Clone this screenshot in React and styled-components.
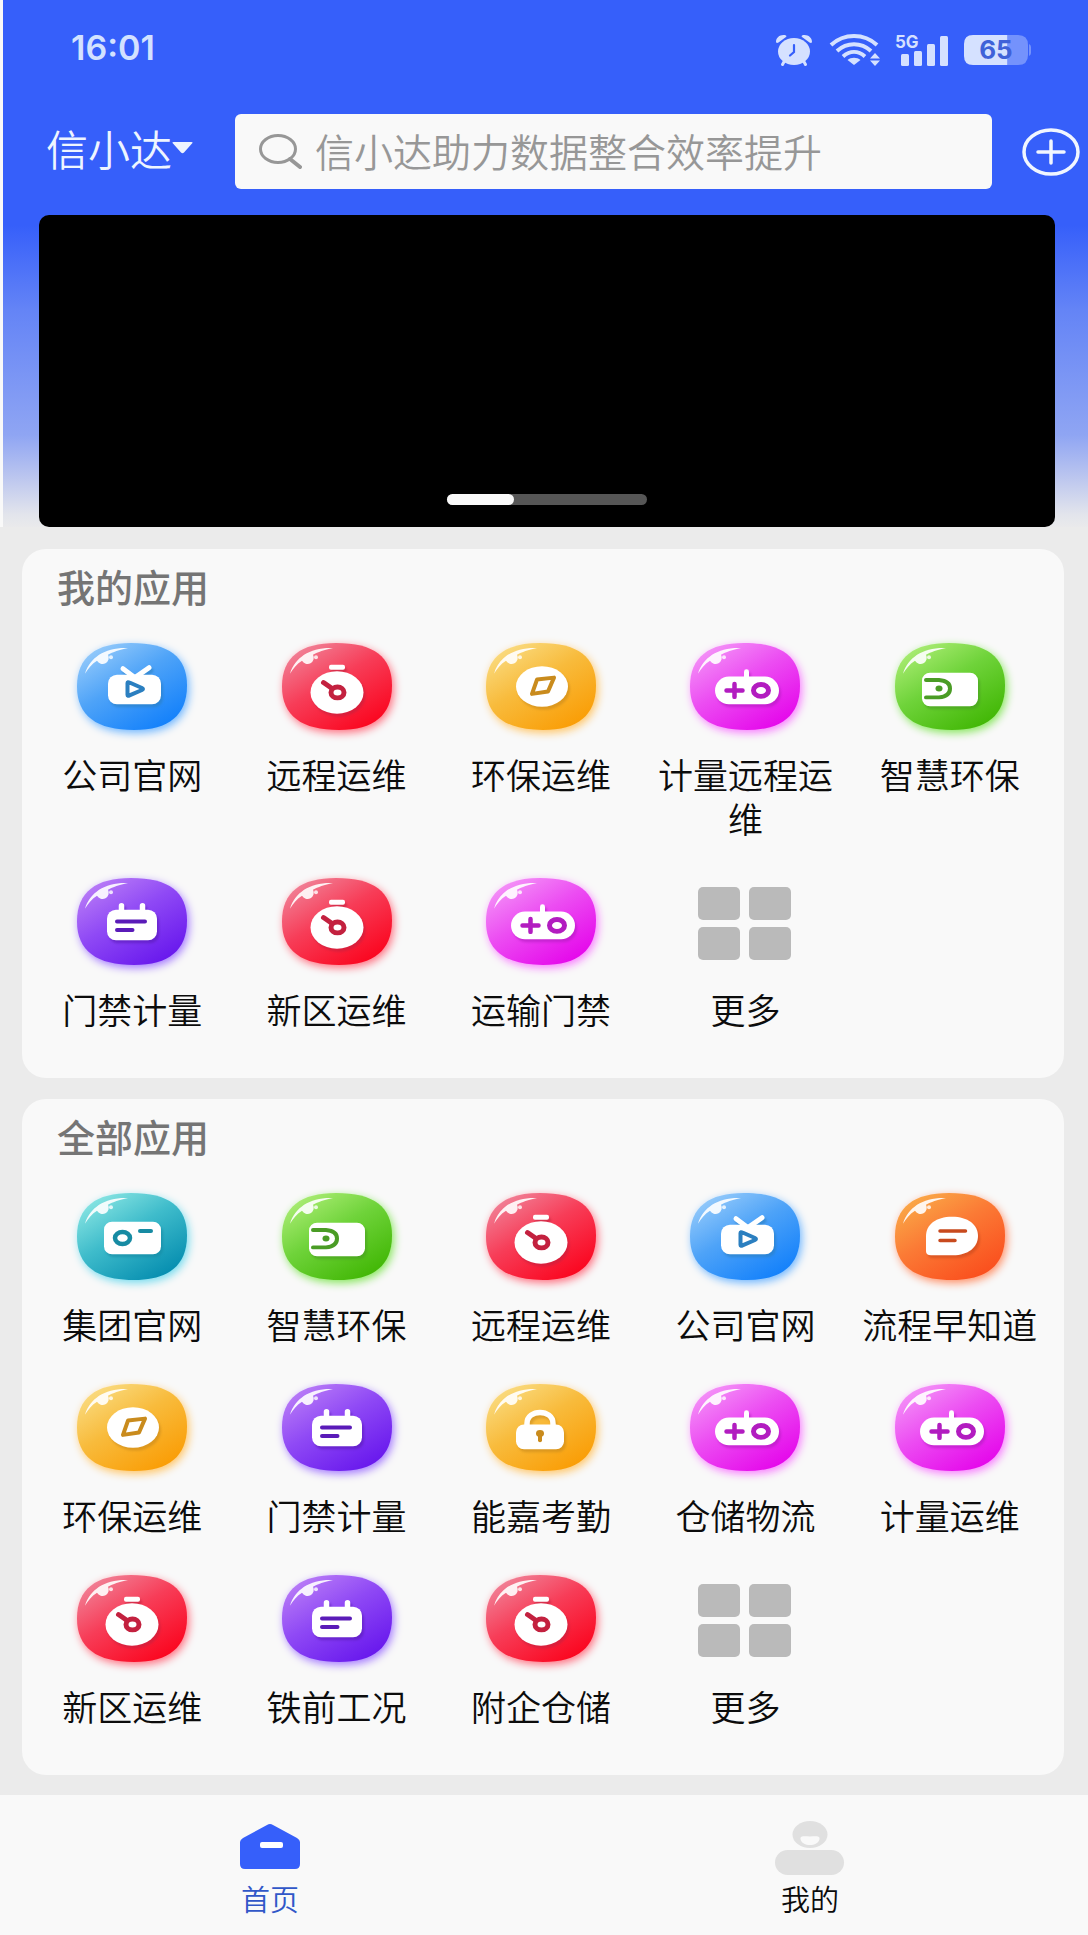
import React, { useId, useState } from "react";
import styled, { createGlobalStyle } from "styled-components";

const GlobalStyle = createGlobalStyle`
    * {
        box-sizing : border-box;
    }

    body {
        margin : 0;
        background : #f9f9f9;
        font-family : "Noto Sans CJK SC", sans-serif;
    }

    button, input {
        font-family : inherit;
    }

    button {
        margin : 0;
        padding : 0;
        border : none;
        background : none;
        cursor : pointer;
    }
`;

const Page = styled.div`
    display : flex;
    flex-direction : column;
    min-height : 100vh;
    background : #ebebeb;
`;

const Hero = styled.header`
    padding-top : 30px;
    border-left : 3px solid #f9f9f9;
    background : linear-gradient(
        #365ffa 0px, #365ffa 225px, #6484f6 310px, #8fa5f3 435px, #b9c4ef 475px, #e3e5ec 515px, #ebebeb 530px
    );
`;

const StatusBar = styled.div`
    display : flex;
    align-items : center;
    height : 40px;
    margin-bottom : 44px;
    padding : 0 57px 0 68px;
    color : #d3e2ff;
`;

const Clock = styled.time`
    margin-right : auto;
    padding-bottom : 4px;
    font-family : Inter, sans-serif;
    font-size : 34px;
    font-weight : 600;
    line-height : 36px;
`;

const StatusIcons = styled.div`
    display : flex;
    align-items : center;
    gap : 16px;

    svg {
        display : block;
        overflow : visible;
    }
`;

const SearchRow = styled.div`
    display : flex;
    align-items : center;
    margin-bottom : 26px;
    padding : 0 8px 0 43px;
`;

const CompanyButton = styled.button`
    display : flex;
    align-items : center;
    margin-right : 42px;
    padding-bottom : 8px;
    color : #eef5ff;
    font-size : 42px;
    font-weight : 350;
    line-height : 60px;
    white-space : nowrap;
`;

const SearchBox = styled.label`
    display : flex;
    align-items : center;
    flex : 1;
    min-width : 0;
    height : 75px;
    gap : 13px;
    padding : 0 24px;
    border-radius : 6px;
    background : #f9f9f9;

    svg {
        flex : none;
    }
`;

const SearchInput = styled.input`
    flex : 1;
    min-width : 0;
    padding : 0 0 4px;
    border : none;
    outline : none;
    background : transparent;
    color : #333333;
    font-size : 39px;
    font-weight : 350;
    line-height : 56px;

    &::placeholder {
        color : #979797;
        opacity : 1;
    }
`;

const AddButton = styled.button`
    display : flex;
    margin-left : 30px;
`;

const Banner = styled.section`
    display : flex;
    align-items : flex-end;
    justify-content : center;
    height : 312px;
    margin : 0 33px 0 36px;
    padding-bottom : 22px;
    border-radius : 10px;
    background : #000000;
`;

const Progress = styled.div`
    width : 200px;
    height : 11px;
    border-radius : 6px;
    background : #565656;
`;

const ProgressBar = styled.div`
    height : 100%;
    border-radius : 6px;
    background : #f9f9f9;
`;

const Main = styled.main`
    display : flex;
    flex-direction : column;
    flex : 1;
    gap : 21px;
    padding : 22px 24px 20px 22px;
`;

const Card = styled.section`
    padding : 15px 12px 47px 8px;
    border-radius : 24px;
    background : #f9f9f9;
`;

const CardTitle = styled.h2`
    margin : 0 0 35px 27px;
    color : #757575;
    font-size : 38px;
    font-weight : 500;
    line-height : 44px;
`;

const AppGrid = styled.div`
    display : grid;
    grid-template-columns : repeat(5, 1fr);
    align-items : start;
    row-gap : 38px;
`;

const AppButton = styled.button`
    display : flex;
    flex-direction : column;
    align-items : center;
    gap : 22px;
    color : #0c0c0c;
    font-size : 35px;
    font-weight : 350;
    line-height : 44px;
`;

const BubbleSvg = styled.svg`
    display : block;
    overflow : visible;
    filter : drop-shadow(2px 3px 4px ${(props) => props.$glow});
`;

const Glyph = styled.g`
    filter : drop-shadow(2px 3px 1px ${(props) => props.$shadow});
`;

const MoreSvg = styled.svg`
    display : block;
    height : 87px;
`;

const TabBar = styled.nav`
    display : grid;
    grid-template-columns : 1fr 1fr;
    height : 140px;
    padding-right : 8px;
    background : #f9f9f9;
`;

const Tab = styled.a`
    display : flex;
    flex-direction : column;
    align-items : center;
    gap : 3px;
    padding-top : 25px;
    color : ${(props) => (props.$active ? "#3157c8" : "#0c0c0c")};
    font-size : 29px;
    font-weight : 350;
    line-height : 40px;
    text-decoration : none;
`;

// from / mid / to : gradient of the bubble, ink : details cut out of the white glyph
const tones = {
    blue : { from : "#9fd0fb", mid : "#4ea3f8", to : "#0d7dfb", glow : "#6fb6ff", ink : "#2b7fc0" },
    red : { from : "#f08ba0", mid : "#f73d58", to : "#fb0019", glow : "#ff6f80", ink : "#c3213f" },
    yellow : { from : "#fae08a", mid : "#f8bb3c", to : "#fa9a00", glow : "#ffc566", ink : "#c98b1d" },
    pink : { from : "#f59cf8", mid : "#ec4df2", to : "#e400ea", glow : "#f87bff", ink : "#b21cc0" },
    green : { from : "#b3f07c", mid : "#6fd33a", to : "#3db400", glow : "#86e65c", ink : "#4a9c25" },
    purple : { from : "#bf83f7", mid : "#8f49f5", to : "#6413ec", glow : "#a378ff", ink : "#5a1bb8" },
    cyan : { from : "#93ebe6", mid : "#3fbccb", to : "#0089ad", glow : "#74dbee", ink : "#178ba3" },
    orange : { from : "#fab04a", mid : "#fb7a35", to : "#fa4a1b", glow : "#ff8f66", ink : "#c84a1e" },
};

const glyphs = {
    tv : (ink) => (
        <>
            <path d="M46 26L58 35L72 25" fill="none" stroke="#fff" strokeWidth="5" strokeLinecap="round" />
            <rect x="31" y="32" width="53" height="30" rx="9" fill="#fff" />
            <path d="M50.5 40.5Q50.5 39 52.5 40L65 45.5Q67 46.5 65 47.5L52.5 53Q50.5 54 50.5 52.5Z" fill="#fff" stroke={ink} strokeWidth="4" strokeLinejoin="round" />
        </>
    ),
    timer : (ink) => (
        <>
            <rect x="47" y="22" width="16" height="5" rx="2" fill="#fff" />
            <ellipse cx="55" cy="50" rx="26.5" ry="21.5" fill="#fff" />
            <path d="M41.5 40L53 48" stroke={ink} strokeWidth="5" strokeLinecap="round" />
            <ellipse cx="55.5" cy="50" rx="6.5" ry="5.5" fill="#fff" stroke={ink} strokeWidth="5" />
        </>
    ),
    compass : (ink) => (
        <>
            <ellipse cx="56" cy="44" rx="26" ry="20.5" fill="#fff" />
            <path d="M51 37L68 35L62 49L46 51.5Z" fill="#fff" stroke={ink} strokeWidth="4" strokeLinejoin="round" />
        </>
    ),
    gamepad : (ink) => (
        <>
            <path d="M56.5 29V36" stroke="#fff" strokeWidth="5" strokeLinecap="round" />
            <rect x="25" y="34" width="64" height="28" rx="14" fill="#fff" />
            <path d="M36.5 48H52.5M44.5 41.5V54.5" stroke={ink} strokeWidth="4.5" strokeLinecap="round" />
            <ellipse cx="71" cy="48" rx="7.5" ry="6" fill="#fff" stroke={ink} strokeWidth="5" />
        </>
    ),
    wallet : (ink) => (
        <>
            <rect x="27" y="30" width="56" height="34" rx="8" fill="#fff" />
            <path d="M31 37.5H44Q55 38.5 55 46Q55 54 44 55H31" fill="none" stroke={ink} strokeWidth="4" strokeLinecap="round" />
            <ellipse cx="44" cy="46" rx="3.5" ry="3" fill={ink} />
        </>
    ),
    calendar : (ink) => (
        <>
            <path d="M44.5 28V36M65.5 28V36" stroke="#fff" strokeWidth="5.5" strokeLinecap="round" />
            <rect x="30" y="32" width="50" height="31" rx="9" fill="#fff" />
            <path d="M40 44H68M40 52.5H55.5" stroke={ink} strokeWidth="4" strokeLinecap="round" />
        </>
    ),
    camera : (ink) => (
        <>
            <rect x="27" y="29" width="57" height="33" rx="8" fill="#fff" />
            <ellipse cx="45.5" cy="45.5" rx="7.5" ry="6" fill="#fff" stroke={ink} strokeWidth="4.5" />
            <path d="M63 38.5H74" stroke={ink} strokeWidth="4" strokeLinecap="round" />
        </>
    ),
    chat : (ink) => (
        <>
            <path d="M57 24C73 24 83 32 83 43.5C83 55 73 63 58 63H36Q31 63 31 59V43.5C31 32 41 24 57 24Z" fill="#fff" />
            <path d="M45 38.5H70.5M45 48H60" stroke={ink} strokeWidth="3.5" strokeLinecap="round" />
        </>
    ),
    lock : (ink) => (
        <>
            <path d="M41 44V40C41 25 67 25 67 40V44" fill="none" stroke="#fff" strokeWidth="5.5" />
            <rect x="30" y="41" width="48" height="25" rx="8" fill="#fff" />
            <path d="M54 51V57" stroke={ink} strokeWidth="4" strokeLinecap="round" />
            <ellipse cx="54" cy="50" rx="4" ry="3.5" fill={ink} />
        </>
    ),
};

const myApps = [
    { name : "公司官网", icon : "tv", tone : "blue" },
    { name : "远程运维", icon : "timer", tone : "red" },
    { name : "环保运维", icon : "compass", tone : "yellow" },
    { name : "计量远程运维", icon : "gamepad", tone : "pink" },
    { name : "智慧环保", icon : "wallet", tone : "green" },
    { name : "门禁计量", icon : "calendar", tone : "purple" },
    { name : "新区运维", icon : "timer", tone : "red" },
    { name : "运输门禁", icon : "gamepad", tone : "pink" },
];

const allApps = [
    { name : "集团官网", icon : "camera", tone : "cyan" },
    { name : "智慧环保", icon : "wallet", tone : "green" },
    { name : "远程运维", icon : "timer", tone : "red" },
    { name : "公司官网", icon : "tv", tone : "blue" },
    { name : "流程早知道", icon : "chat", tone : "orange" },
    { name : "环保运维", icon : "compass", tone : "yellow" },
    { name : "门禁计量", icon : "calendar", tone : "purple" },
    { name : "能嘉考勤", icon : "lock", tone : "yellow" },
    { name : "仓储物流", icon : "gamepad", tone : "pink" },
    { name : "计量运维", icon : "gamepad", tone : "pink" },
    { name : "新区运维", icon : "timer", tone : "red" },
    { name : "铁前工况", icon : "calendar", tone : "purple" },
    { name : "附企仓储", icon : "timer", tone : "red" },
];

function Bubble({ icon, tone }) {
    const id = useId();
    const { from, mid, to, glow, ink } = tones[tone];

    return (
        <BubbleSvg width="110" height="87" viewBox="0 0 110 88" preserveAspectRatio="none" $glow={glow} aria-hidden="true">
            <linearGradient id={id} x1="0.1" y1="0" x2="0.85" y2="1">
                <stop offset="0" stopColor={from} />
                <stop offset="0.45" stopColor={mid} />
                <stop offset="1" stopColor={to} />
            </linearGradient>
            <path d="M54 0C92 0 110 14 110 43C110 73 92 88 57 88C20 88 0 74 0 44C0 14 19 0 54 0Z" fill={`url(#${id})`} />
            <path d="M8 31C13 14 29 4 51 5C42 7 36 9 31 12A6 6 0 1 1 20 18C15 21 11 26 8 31Z" fill="#fff" opacity="0.9" />
            <circle cx="34" cy="14.5" r="2" fill="#fff" opacity="0.8" />
            <Glyph $shadow={`${ink}99`}>{glyphs[icon](ink)}</Glyph>
        </BubbleSvg>
    );
}

function AppSection({ title, apps }) {
    return (
        <Card>
            <CardTitle>{title}</CardTitle>
            <AppGrid>
                {apps.map((app) => (
                    <AppButton key={app.name} type="button">
                        <Bubble icon={app.icon} tone={app.tone} />
                        <span>{app.name}</span>
                    </AppButton>
                ))}
                <AppButton type="button">
                    <MoreSvg width="94" height="87" viewBox="0 0 94 87" fill="#bababa" aria-hidden="true">
                        <rect x="0" y="9" width="42" height="33" rx="5" />
                        <rect x="51" y="9" width="42" height="33" rx="5" />
                        <rect x="0" y="49" width="42" height="33" rx="5" />
                        <rect x="51" y="49" width="42" height="33" rx="5" />
                    </MoreSvg>
                    <span>更多</span>
                </AppButton>
            </AppGrid>
        </Card>
    );
}

function PhoneStatus() {
    return (
        <StatusIcons>
            <svg width="36" height="32" viewBox="0 0 36 32" fill="#d5e1ff">
                <path d="M0 8C0 3 5 0 10 1.5Q11 2 10 3L2.5 8.5Q0.5 9.5 0 8ZM36 8C36 3 31 0 26 1.5Q25 2 26 3L33.5 8.5Q35.5 9.5 36 8Z" />
                <path d="M9 26L6.5 30.5M27 26L29.5 30.5" stroke="#d5e1ff" strokeWidth="3" strokeLinecap="round" />
                <ellipse cx="18" cy="17.5" rx="16" ry="13.5" />
                <path d="M18 11V18L14 21.5" fill="none" stroke="#365ffa" strokeWidth="2.2" strokeLinecap="round" />
            </svg>
            <svg width="52" height="32" viewBox="0 0 52 32" fill="none" stroke="#d5e1ff" strokeWidth="4">
                <path d="M3 11C16 -1 36 -1 49 11M9 17C19 8 33 8 43 17M15 22.5C22 16.5 30 16.5 37 22.5" />
                <path d="M26 31L19.5 26C23 23 29 23 32.5 26Z" fill="#d5e1ff" stroke="none" />
                <path d="M47 19L52 24.5H42ZM47 32L52 26.5H42Z" fill="#d5e1ff" stroke="none" />
            </svg>
            <svg width="52" height="32" viewBox="0 0 52 32" fill="#d5e1ff">
                <text x="-1" y="14" fontFamily="Inter, sans-serif" fontSize="17" fontWeight="700">5G</text>
                <rect x="5" y="20" width="8" height="12" rx="1.5" />
                <rect x="18" y="17" width="8" height="15" rx="1.5" />
                <rect x="31" y="10" width="8" height="22" rx="1.5" />
                <rect x="44" y="2" width="8" height="30" rx="1.5" />
            </svg>
            <svg width="67" height="30" viewBox="0 0 67 30">
                <path d="M44 0H54Q64 0 64 10V20Q64 30 54 30H44ZM65 9Q67 10 67 12V18Q67 20 65 21Z" fill="#7492fc" />
                <path d="M9 0H43.5V30H9Q0 30 0 21V9Q0 0 9 0Z" fill="#d5e1ff" />
                <text x="32" y="24" textAnchor="middle" fontFamily="Inter, sans-serif" fontSize="26" fontWeight="700" fill="#3f62d8">65</text>
            </svg>
        </StatusIcons>
    );
}

function App() {
    const [keyword, setKeyword] = useState("");
    const [slide] = useState(0);
    const slideCount = 3;

    return (
        <>
            <GlobalStyle />
            <Page>
                <Hero>
                    <StatusBar>
                        <Clock>16:01</Clock>
                        <PhoneStatus />
                    </StatusBar>
                    <SearchRow>
                        <CompanyButton type="button">
                            信小达
                            <svg width="21" height="12" viewBox="0 0 21 12" fill="#eef5ff" aria-hidden="true">
                                <path d="M1.5 0H19.5Q21.5 0 20 1.5L12 10.5Q10.5 12 9 10.5L1 1.5Q-0.5 0 1.5 0Z" />
                            </svg>
                        </CompanyButton>
                        <SearchBox>
                            <svg width="43" height="36" viewBox="0 0 43 36" fill="none" stroke="#979797" strokeWidth="3" aria-hidden="true">
                                <ellipse cx="19" cy="15" rx="17.5" ry="13.5" />
                                <path d="M31 25L41 33" strokeWidth="4" strokeLinecap="round" />
                            </svg>
                            <SearchInput
                                type="text"
                                aria-label="搜索"
                                placeholder="信小达助力数据整合效率提升"
                                value={keyword}
                                onChange={(e) => setKeyword(e.target.value)}
                            />
                        </SearchBox>
                        <AddButton type="button" aria-label="添加">
                            <svg width="58" height="48" viewBox="0 0 58 48" fill="none" stroke="#f1f6ff" strokeWidth="3.5">
                                <ellipse cx="29" cy="24" rx="27" ry="22" />
                                <path d="M16 24H42M29 13V35" strokeLinecap="round" />
                            </svg>
                        </AddButton>
                    </SearchRow>
                    <Banner>
                        <Progress>
                            <ProgressBar style={{ width : `${((slide + 1) / slideCount) * 100}%` }} />
                        </Progress>
                    </Banner>
                </Hero>
                <Main>
                    <AppSection title="我的应用" apps={myApps} />
                    <AppSection title="全部应用" apps={allApps} />
                </Main>
                <TabBar>
                    <Tab href="#home" $active>
                        <svg width="60" height="55" viewBox="0 0 60 55" aria-hidden="true">
                            <path d="M27 5Q30 3 33 5L57 18Q60 20 60 22V44Q60 49 55 49H5Q0 49 0 44V22Q0 20 3 18Z" fill="#365ffa" />
                            <rect x="20" y="22" width="23" height="6" rx="2" fill="#fff" />
                        </svg>
                        首页
                    </Tab>
                    <Tab href="#me">
                        <svg width="70" height="55" viewBox="0 0 70 55" fill="#e0e0e0" aria-hidden="true">
                            <ellipse cx="35" cy="14.5" rx="17.5" ry="13.5" />
                            <path d="M25.5 19C25 15.500 30 16.5 35 16.5C40 16.5 45 15.5 44.5 19C43 27 27 27 25.5 19Z" fill="#f9f9f9" />
                            <rect x="0" y="30" width="69" height="25" rx="12.5" />
                        </svg>
                        我的
                    </Tab>
                </TabBar>
            </Page>
        </>
    );
}

export default App;
